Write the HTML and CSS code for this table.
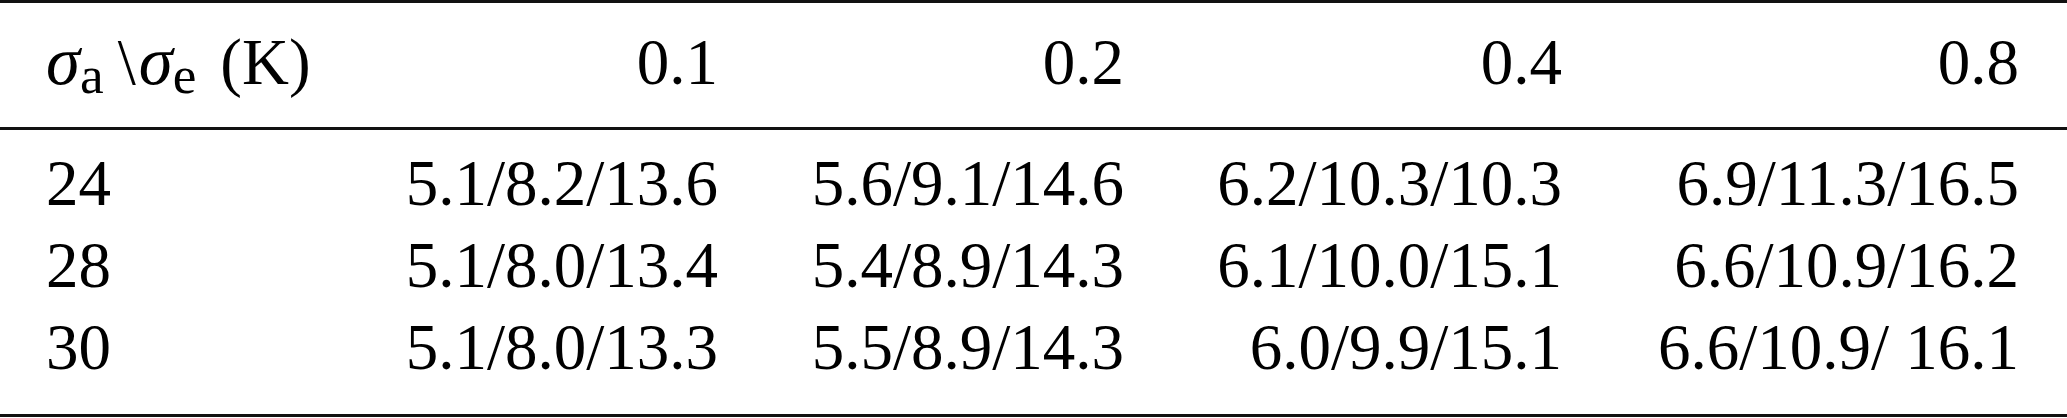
FILE: index.html
```html
<!DOCTYPE html>
<html lang="en">

<head>
    <meta charset="UTF-8">
    <meta name="viewport" content="width=device-width, initial-scale=1.0">
    <title>Error table</title>
    <link rel="stylesheet" href="styles.css">
</head>

<body>
    <table class="results">
        <colgroup>
            <col class="col-label">
            <col class="col-1">
            <col class="col-2">
            <col class="col-3">
            <col class="col-4">
        </colgroup>
        <thead>
            <tr>
                <th class="label"><i>σ</i><sub>a</sub><span class="bs">\</span><i>σ</i><sub>e</sub><span class="unit">(K)</span></th>
                <th>0.1</th>
                <th>0.2</th>
                <th>0.4</th>
                <th>0.8</th>
            </tr>
        </thead>
        <tbody>
            <tr>
                <td class="label">24</td>
                <td>5.1/8.2/13.6</td>
                <td>5.6/9.1/14.6</td>
                <td>6.2/10.3/10.3</td>
                <td>6.9/11.3/16.5</td>
            </tr>
            <tr>
                <td class="label">28</td>
                <td>5.1/8.0/13.4</td>
                <td>5.4/8.9/14.3</td>
                <td>6.1/10.0/15.1</td>
                <td>6.6/10.9/16.2</td>
            </tr>
            <tr>
                <td class="label">30</td>
                <td>5.1/8.0/13.3</td>
                <td>5.5/8.9/14.3</td>
                <td>6.0/9.9/15.1</td>
                <td>6.6/10.9/ 16.1</td>
            </tr>
        </tbody>
    </table>
</body>

</html>
```

FILE: styles.css
```css
* {
    margin: 0;
    padding: 0;
    box-sizing: border-box;
}

body {
    background-color: #fff;
    color: #000;
    font-family: "Liberation Serif", "Times New Roman", serif;
}

.results {
    width: 2067px;
    table-layout: fixed;
    border-collapse: collapse;
    font-size: 65px;
    line-height: 82px;
    border-top: 3px solid #111;
    border-bottom: 3px solid #111;
}

.col-label { width: 346px; }
.col-1 { width: 372px; }
.col-2 { width: 406px; }
.col-3 { width: 438px; }
.col-4 { width: 505px; }

th,
td {
    font-weight: normal;
    text-align: right;
    white-space: nowrap;
    padding: 0;
}

th:last-child,
td:last-child {
    padding-right: 48px;
}

.label {
    text-align: left;
    padding-left: 46px;
}

thead tr {
    border-bottom: 3px solid #111;
}

thead th {
    padding-top: 17px;
    padding-bottom: 24px;
}

tbody tr:first-child td {
    padding-top: 12px;
}

tbody tr:last-child td {
    padding-bottom: 26px;
}

.label i {
    font-size: 1.06em;
}

sub {
    font-size: 0.82em;
    line-height: 0;
    vertical-align: -0.16em;
}

.bs {
    margin-left: 14px;
    margin-right: 3px;
}

.unit {
    margin-left: 24px;
}
```
